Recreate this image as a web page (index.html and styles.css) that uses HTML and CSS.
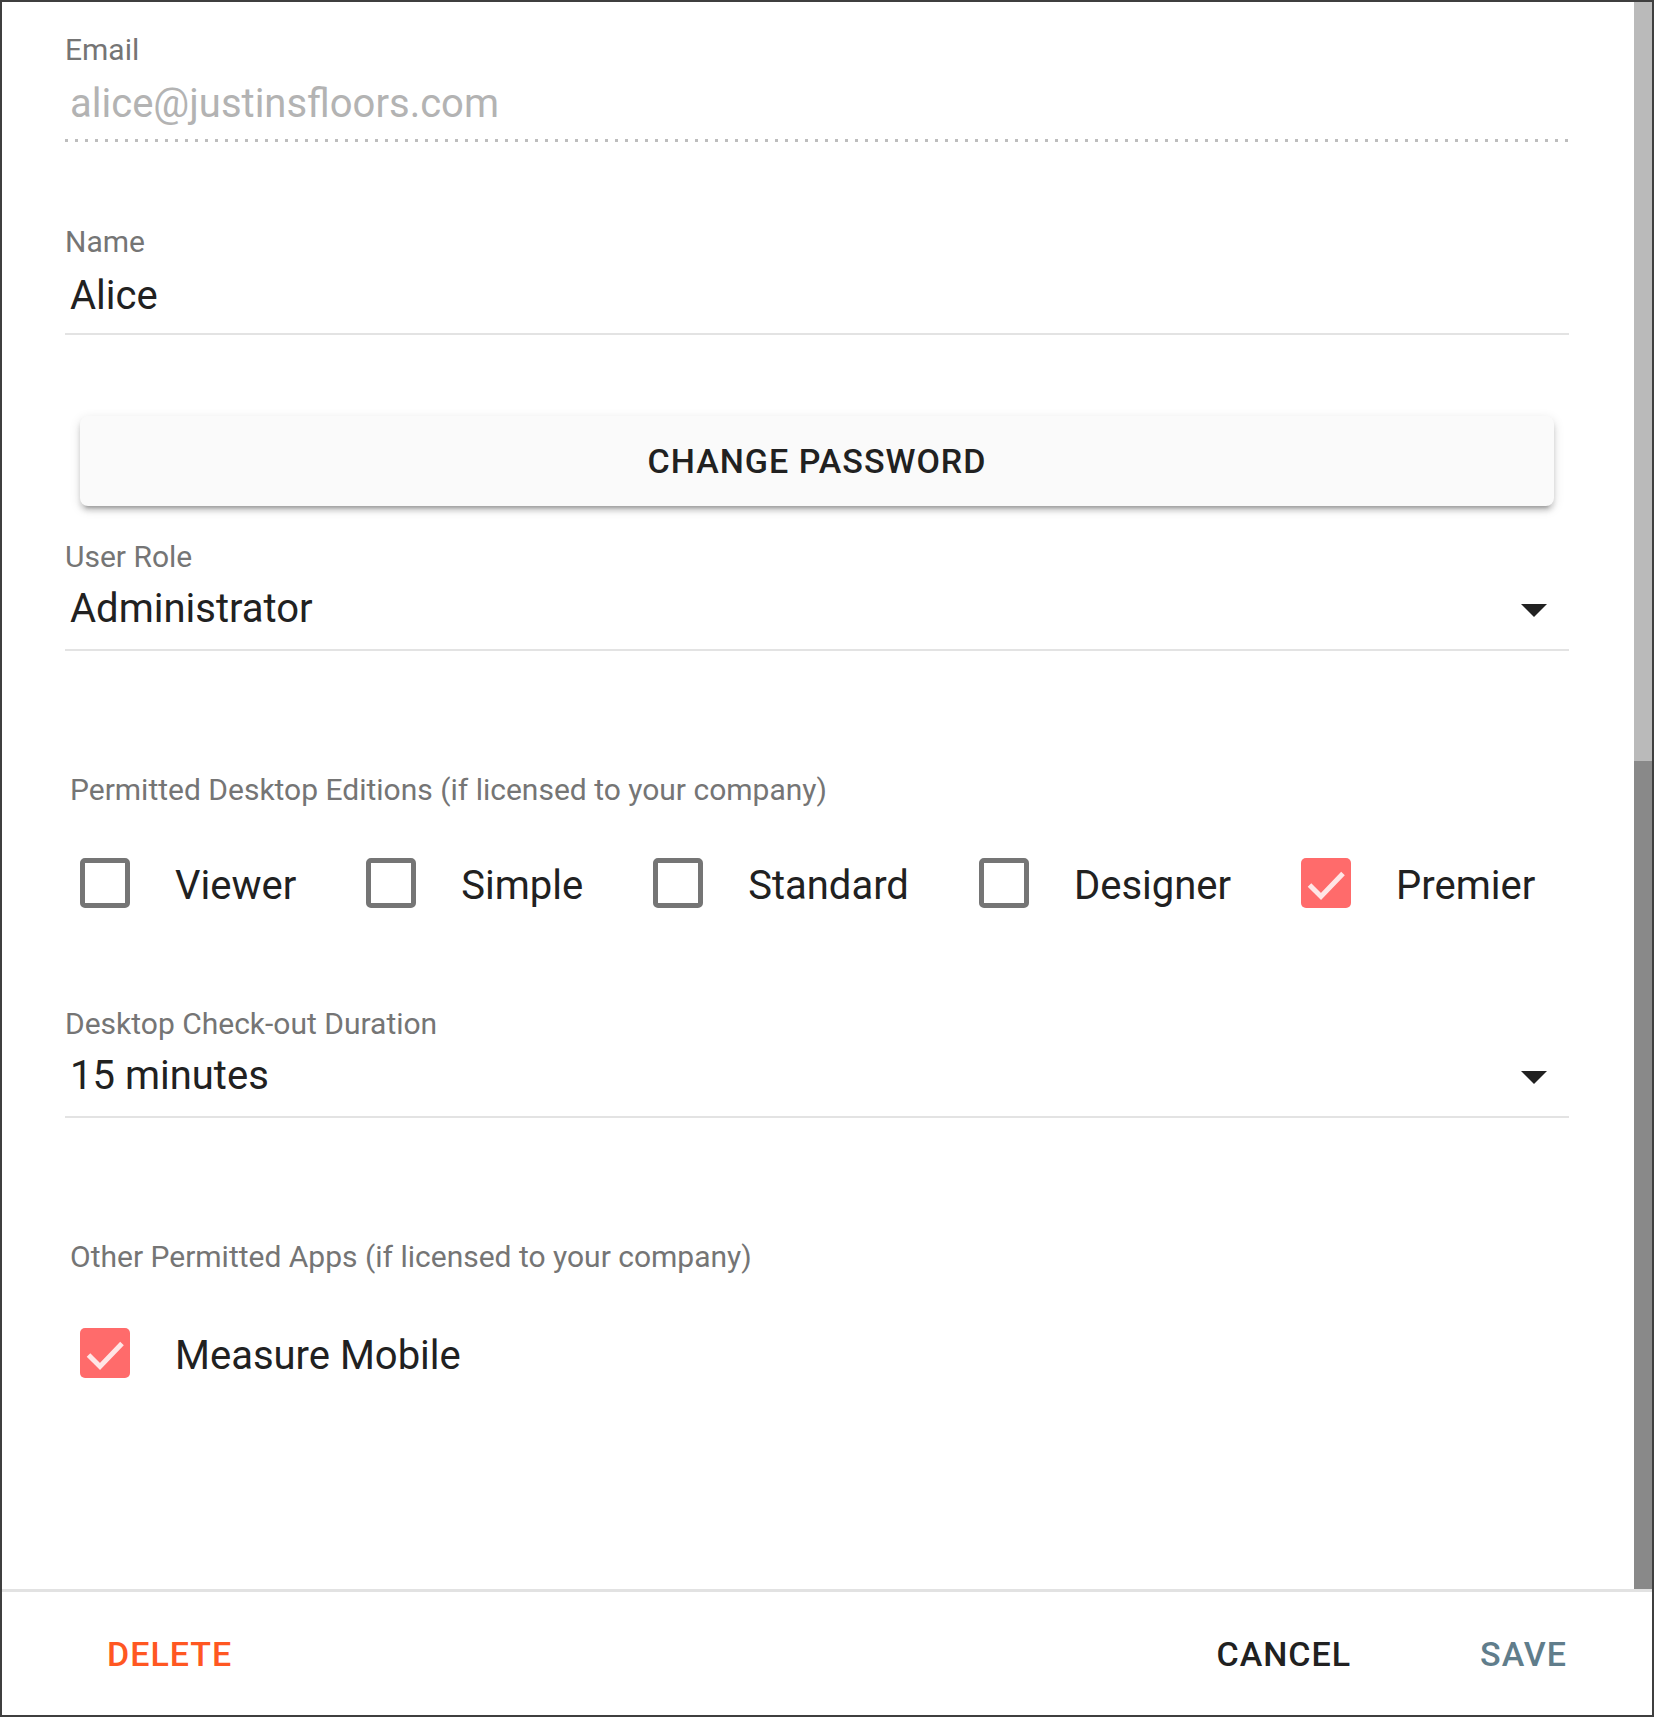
FILE: index.html
```html
<!DOCTYPE html>
<html lang="en">
<head>
<meta charset="utf-8">
<title>Edit User</title>
<link rel="stylesheet" href="styles.css">
</head>
<body>
<div class="dialog">
  <div class="body">
    <div class="form">
      <div class="field field-disabled field-email">
        <div class="label">Email</div>
        <div class="input input-disabled">alice@justinsfloors.com</div>
      </div>

      <div class="field field-name">
        <div class="label">Name</div>
        <div class="input">Alice</div>
      </div>

      <div class="btn-raised">CHANGE PASSWORD</div>

      <div class="field field-select field-role">
        <div class="label">User Role</div>
        <div class="input select-row">
          <span>Administrator</span>
          <svg class="arrow" viewBox="0 0 26 13" width="26" height="13"><path d="M0 0 L26 0 L13 13 Z" fill="#212121"/></svg>
        </div>
      </div>

      <div class="section-label section-editions">Permitted Desktop Editions (if licensed to your company)</div>
      <div class="check-row row-editions">
        <div class="check-item">
          <span class="box"></span><span class="check-label">Viewer</span>
        </div>
        <div class="check-item">
          <span class="box"></span><span class="check-label">Simple</span>
        </div>
        <div class="check-item">
          <span class="box"></span><span class="check-label">Standard</span>
        </div>
        <div class="check-item">
          <span class="box"></span><span class="check-label">Designer</span>
        </div>
        <div class="check-item">
          <span class="box box-checked"><svg viewBox="0 0 50 50" width="50" height="50"><path d="M8.5 27 L20 38.5 L42 15.5" fill="none" stroke="#ffe6e6" stroke-width="5"/></svg></span><span class="check-label">Premier</span>
        </div>
      </div>

      <div class="field field-select field-duration">
        <div class="label">Desktop Check-out Duration</div>
        <div class="input select-row">
          <span>15 minutes</span>
          <svg class="arrow" viewBox="0 0 26 13" width="26" height="13"><path d="M0 0 L26 0 L13 13 Z" fill="#212121"/></svg>
        </div>
      </div>

      <div class="section-label section-apps">Other Permitted Apps (if licensed to your company)</div>
      <div class="check-row row-apps">
        <div class="check-item">
          <span class="box box-checked"><svg viewBox="0 0 50 50" width="50" height="50"><path d="M8.5 27 L20 38.5 L42 15.5" fill="none" stroke="#ffe6e6" stroke-width="5"/></svg></span><span class="check-label">Measure Mobile</span>
        </div>
      </div>
    </div>
    <div class="scrollbar">
      <div class="track"></div>
      <div class="thumb"></div>
    </div>
  </div>
  <div class="footer">
    <span class="fbtn fbtn-delete">DELETE</span>
    <span class="spacer"></span>
    <span class="fbtn fbtn-cancel">CANCEL</span>
    <span class="fbtn fbtn-save">SAVE</span>
  </div>
</div>
</body>
</html>
```

FILE: styles.css
```css
* {
  box-sizing: border-box;
}

html, body {
  margin: 0;
  padding: 0;
  background: #ffffff;
}

body {
  font-family: Roboto, "Liberation Sans", Arial, sans-serif;
  color: #212121;
}

.dialog {
  width: 1654px;
  height: 1717px;
  border: 2px solid #3f3f3f;
  display: flex;
  flex-direction: column;
  background: #ffffff;
  overflow: hidden;
}

.body {
  flex: 1;
  display: flex;
  flex-direction: row;
  min-height: 0;
}

.form {
  flex: 1;
  padding: 31px 65px 0 63px;
  display: flex;
  flex-direction: column;
}

.scrollbar {
  width: 18px;
  display: flex;
  flex-direction: column;
}

.track {
  height: 759px;
  background: #bababa;
}

.thumb {
  flex: 1;
  background: #898989;
}

/* Text fields */
.field {
  display: flex;
  flex-direction: column;
  border-bottom: 2px solid #e3e3e3;
  padding-bottom: 12px;
}

.label {
  font-size: 30px;
  line-height: 34px;
  color: #757575;
  margin-bottom: 12px;
}

.input {
  font-size: 40px;
  line-height: 50px;
  height: 50px;
  padding-left: 5px;
  color: #212121;
  white-space: nowrap;
}

.input-disabled {
  color: #b3b3b3;
}

.field-disabled {
  border-bottom: none;
  padding-bottom: 13px;
  background-image: linear-gradient(to right, #bdbdbd 3px, transparent 3px);
  background-size: 10px 3px;
  background-repeat: repeat-x;
  background-position: left bottom;
}

.field-name {
  margin-top: 83px;
}

.field-select {
  padding-bottom: 15px;
}

.field-select .label {
  margin-bottom: 10px;
}

.field-role {
  margin-top: 34px;
}

.field-duration {
  margin-top: 96px;
}

.select-row {
  display: flex;
  align-items: center;
  justify-content: space-between;
}

.arrow {
  display: block;
  margin-right: 22px;
  margin-top: 2px;
}

/* Raised button */
.btn-raised {
  margin: 81px 15px 0 15px;
  height: 90px;
  background: #fafafa;
  border-radius: 8px;
  box-shadow: 0 7px 3px -5px rgba(0, 0, 0, 0.2), 0 5px 5px 0 rgba(0, 0, 0, 0.14), 0 3px 12px 0 rgba(0, 0, 0, 0.12);
  display: flex;
  align-items: center;
  justify-content: center;
  font-size: 34px;
  font-weight: 500;
  letter-spacing: 1px;
  color: #212121;
}

/* Section labels */
.section-label {
  font-size: 30px;
  line-height: 34px;
  color: #757575;
  padding-left: 5px;
  white-space: nowrap;
}

.section-editions {
  margin-top: 122px;
}

.section-apps {
  margin-top: 122px;
}

/* Checkboxes */
.check-row {
  display: flex;
  flex-direction: row;
  align-items: center;
  gap: 70px;
  padding-left: 15px;
}

.row-editions {
  margin-top: 48px;
}

.row-apps {
  margin-top: 51px;
}

.check-item {
  display: flex;
  align-items: center;
}

.box {
  width: 50px;
  height: 50px;
  border: 5px solid #757575;
  border-radius: 5px;
  display: block;
  flex: none;
}

.box-checked {
  border: none;
  background: #ff6b6b;
}

.box-checked svg {
  display: block;
}

.check-label {
  margin-left: 45px;
  font-size: 40px;
  line-height: 50px;
  padding-top: 6px;
  color: #212121;
  white-space: nowrap;
}

/* Footer */
.footer {
  height: 126px;
  flex: none;
  border-top: 3px solid #e2e2e2;
  display: flex;
  align-items: center;
  padding: 0 85px 0 105px;
}

.spacer {
  flex: 1;
}

.fbtn {
  font-size: 34px;
  font-weight: 500;
  letter-spacing: 1px;
  line-height: 40px;
}

.fbtn-delete {
  color: #ff5722;
}

.fbtn-cancel {
  color: #212121;
}

.fbtn-save {
  color: #607d8b;
  margin-left: 129px;
}
```
